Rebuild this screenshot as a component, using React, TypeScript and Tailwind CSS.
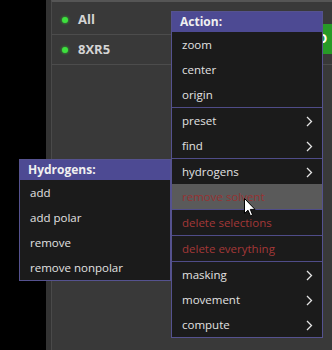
import React from "react";

const font = { fontFamily: '"Open Sans", "Noto Sans", sans-serif' };

type Item = { label: string; sub?: boolean; red?: boolean; hover?: boolean };

const actionGroups: Item[][] = [
  [{ label: "zoom" }, { label: "center" }, { label: "origin" }],
  [
    { label: "preset", sub: true },
    { label: "find", sub: true },
  ],
  [
    { label: "hydrogens", sub: true },
    { label: "remove solvent", red: true, hover: true },
  ],
  [{ label: "delete selections", red: true }],
  [{ label: "delete everything", red: true }],
  [
    { label: "masking", sub: true },
    { label: "movement", sub: true },
    { label: "compute", sub: true },
  ],
];

const hydrogenItems = ["add", "add polar", "remove", "remove nonpolar"];

const Chevron = () => (
  <svg width="7" height="11" viewBox="0 0 7 11" className="shrink-0">
    <path d="M1 1 L5.5 5.5 L1 10" fill="none" stroke="#e4e4e4" strokeWidth="1.3" />
  </svg>
);

const Cursor = () => (
  <svg width="12" height="19" viewBox="0 0 12 19">
    <path
      d="M0.5 0.5 L0.5 15.5 L4 12.2 L6.4 17.8 L8.6 16.9 L6.3 11.4 L11 11.4 Z"
      fill="#ffffff"
      stroke="#000000"
      strokeWidth="1"
      strokeLinejoin="round"
    />
  </svg>
);

const MenuRow = ({ item }: { item: Item }) => (
  <div
    className={`flex h-[25px] items-center justify-between pl-[10px] pr-[9px] pt-[1px] text-[11.5px] ${
      item.hover ? "bg-[#5a5a5a]" : ""
    } ${item.red ? (item.hover ? "text-[#963232]" : "text-[#a43838]") : "text-[#e2e2e2]"}`}
  >
    <span>{item.label}</span>
    {item.sub && <Chevron />}
  </div>
);

const PanelRow = ({ name }: { name: string }) => (
  <div className="flex h-[30px] items-center border-b border-[#4c4c4c] pt-[1px]">
    <span className="ml-[10px] h-[6px] w-[6px] rounded-full bg-[#3ee03e] shadow-[0_0_3px_#2bd62b]" />
    <span className="ml-[10px] text-[13px] font-bold text-[#d4d4d4]">{name}</span>
  </div>
);

export default function App() {
  return (
    <div className="relative flex h-[350px] w-[332px] overflow-hidden bg-black" style={font}>
      <div className="w-[46px] shrink-0 bg-black" />
      <div className="flex flex-1 bg-[#353535]">
        <div className="w-[5px] shrink-0 bg-[#333333]" />
        <div className="flex-1 border-l border-[#4a4a4a] border-t-2 border-t-[#555555] bg-[#393939] pt-[3px]">
          <PanelRow name="All" />
          <PanelRow name="8XR5" />
        </div>
      </div>

      {/* badge peeking out behind the menu */}
      <div className="absolute left-[323px] top-[24px] flex h-[30px] w-[20px] items-center bg-[#279a27] text-[13px] font-bold text-white">
        <span className="-ml-[6px]">O</span>
      </div>

      {/* Action menu */}
      <div className="absolute left-[171px] top-[11px] w-[152px] border border-[#55528f] bg-[#1b1b1b]">
        <div className="flex h-[20px] items-center bg-[#4d4a93] pl-[8px] text-[12px] font-bold text-[#f0f0f0]">
          Action:
        </div>
        {actionGroups.map((group, gi) => (
          <div key={gi} className={gi > 0 ? "border-t border-[#4f4c88]" : ""}>
            {group.map((item) => (
              <MenuRow key={item.label} item={item} />
            ))}
          </div>
        ))}
      </div>

      {/* Hydrogens submenu */}
      <div className="absolute left-[19px] top-[159px] w-[152px] border border-[#55528f] bg-[#1b1b1b]">
        <div className="flex h-[20px] items-center bg-[#4d4a93] pl-[8px] text-[12px] font-bold text-[#f0f0f0]">
          Hydrogens:
        </div>
        {hydrogenItems.map((label) => (
          <div key={label} className="flex h-[25px] items-center pl-[10px] pt-[1px] text-[11.5px] text-[#e2e2e2]">
            {label}
          </div>
        ))}
      </div>

      <div className="absolute left-[244px] top-[198px]">
        <Cursor />
      </div>
    </div>
  );
}
